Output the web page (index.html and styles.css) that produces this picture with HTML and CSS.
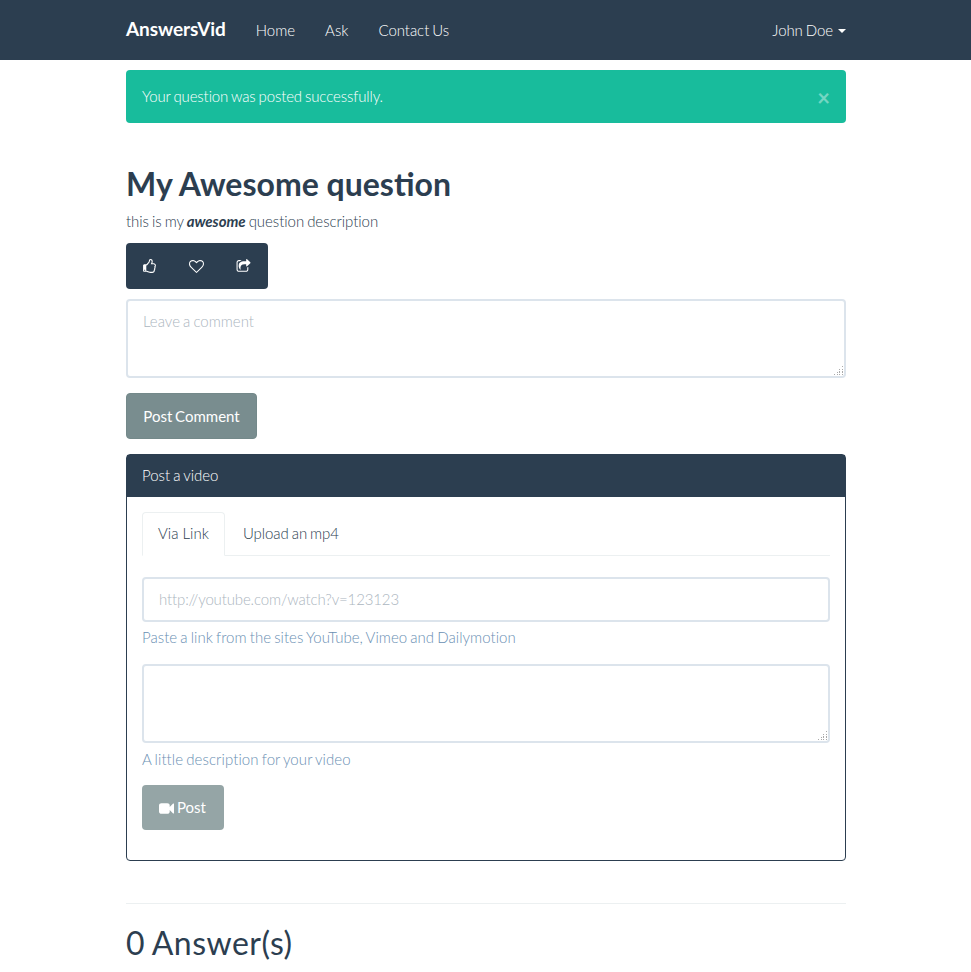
FILE: index.html
```html
<!DOCTYPE html>
<html lang="en">
<head>
<meta charset="utf-8">
<title>AnswersVid</title>
<link rel="stylesheet" href="styles.css">
</head>
<body>
<nav class="navbar">
  <div class="container nav-row">
    <a class="brand">AnswersVid</a>
    <a class="nav-link">Home</a>
    <a class="nav-link">Ask</a>
    <a class="nav-link contact">Contact Us</a>
    <a class="nav-link user">John Doe<span class="caret"></span></a>
  </div>
</nav>
<main class="container">
  <div class="alert"><span class="alert-text">Your question was posted successfully.</span><span class="close">×</span></div>
  <h2 class="title">My Awesome question</h2>
  <p class="description">this is my <strong><em>awesome</em></strong> question description</p>
  <div class="actions">
    <button class="action" aria-label="Like"><svg class="icon" viewBox="0 0 1792 1792"><path d="M384 1344q0-26-19-45t-45-19-45 19-19 45 19 45 45 19 45-19 19-45zm1152-576q0-51-39-89.5t-89-38.5h-352q0-58 48-159.5t48-160.5q0-98-32-145t-128-47q-26 26-38 85t-30.5 125.5-59.5 109.5q-22 23-77 91-4 5-23 30t-31.5 41-34.5 42.5-40 44-38.5 35.5-40 27-35.5 9h-32v640h32q13 0 31.5 3t33 6.5 38 11 35 11.5 35.5 12.5 29 10.5q211 73 342 73h121q192 0 192-167 0-26-5-56 30-16 47.5-52.5t17.5-73.5-18-69q53-50 53-119 0-25-10-55.5t-25-47.5q32-1 53.5-47t21.5-81zm128-1q0 89-49 163 9 33 9 69 0 77-38 144 3 21 3 43 0 101-60 178 1 139-85 219.5t-227 80.5h-129q-96 0-189.5-22.5t-216.5-65.5q-116-40-138-40h-288q-53 0-90.5-37.5t-37.5-90.5v-640q0-53 37.5-90.5t90.5-37.5h274q36-24 137-155 58-75 107-128 24-25 35.5-85.5t30.5-126.5 62-108q39-37 90-37 84 0 151 32.5t102 101.5 35 186q0 93-48 192h176q104 0 180 76t76 179z"/></svg></button>
    <button class="action" aria-label="Favourite"><svg class="icon" viewBox="0 0 1792 1792"><path d="M1664 596q0-81-21.500-143t-55-98.500-81.500-59.500-94-31-98-8-112 25.500-110.500 64-86.500 72-60 61.500q-18 22-49 22t-49-22q-24-28-60-61.500t-86.500-72-110.500-64-112-25.500-98 8-94 31-81.500 59.500-55 98.500-21.500 143q0 168 187 355l581 560 580-559q188-188 188-356zm128 0q0 221-229 450l-623 600q-18 18-44 18t-44-18l-624-602q-10-8-27.500-26t-55.500-65.500-68-97.500-53.500-121-23.500-138q0-220 127-344t351-124q62 0 126.500 21.500t120 58 95.500 68.500 76 68q36-36 76-68t95.500-68.500 120-58 126.500-21.500q224 0 351 124t127 344z"/></svg></button>
    <button class="action share" aria-label="Share"><svg class="icon" viewBox="0 0 1792 1792"><path d="M1472 989v259q0 119-84.500 203.500t-203.500 84.500h-832q-119 0-203.500-84.500t-84.500-203.500v-832q0-119 84.500-203.500t203.500-84.500h255q13 0 22.500 9.500t9.500 22.500q0 27-26 32-77 26-133 60-10 4-16 4h-112q-66 0-113 47t-47 113v832q0 66 47 113t113 47h832q66 0 113-47t47-113v-214q0-19 18-29 28-13 54-37 16-16 35-8 21 9 21 29zm237-496l-384 384q-18 19-45 19-12 0-25-5-39-17-39-59v-192h-160q-323 0-438 131-119 137-74 473 3 23-20 34-8 2-12 2-16 0-26-13-10-14-21-31t-39.500-68.500-49.500-99.500-38.500-114-17.500-122q0-49 3.500-91t14-90 28-88 47-81.500 68.500-74 94.500-61.500 124.500-48.500 159.500-30.500 196.500-11h160v-192q0-42 39-59 13-5 25-5 26 0 45 19l384 384q19 19 19 45t-19 45z"/></svg></button>
  </div>
  <div class="area comment-area">
    <textarea class="field" placeholder="Leave a comment"></textarea>
    <svg class="grip" viewBox="0 0 10 10"><path d="M8 0h1v1H8zM5 3h1v1H5zM8 3h1v1H8zM3 6h1v1H3zM5 5h1v1H5zM8 5h1v1H8zM5 6h1v1H5zM8 6h1v1H8zM0 8h1v1H0zM3 8h1v1H3zM5 8h1v1H5zM8 8h1v1H8z"/></svg>
  </div>
  <button class="btn btn-comment">Post Comment</button>
  <section class="panel">
    <header class="panel-heading">Post a video</header>
    <div class="panel-body">
      <div class="tabs"><a class="tab active">Via Link</a><a class="tab upload">Upload an mp4</a></div>
      <input class="field link-field" type="text" placeholder="http://youtube.com/watch?v=123123">
      <p class="help">Paste a link from the sites YouTube, Vimeo and Dailymotion</p>
      <div class="area">
        <textarea class="field" aria-label="Video description"></textarea>
        <svg class="grip" viewBox="0 0 10 10"><path d="M8 0h1v1H8zM5 3h1v1H5zM8 3h1v1H8zM3 6h1v1H3zM5 5h1v1H5zM8 5h1v1H8zM5 6h1v1H5zM8 6h1v1H8zM0 8h1v1H0zM3 8h1v1H3zM5 8h1v1H5zM8 8h1v1H8z"/></svg>
      </div>
      <p class="help">A little description for your video</p>
      <button class="btn btn-video"><svg class="icon" viewBox="0 0 1792 1792"><path d="M1792 352v1088q0 42-39 59-13 5-25 5-27 0-45-19l-403-403v166q0 119-84.500 203.500t-203.500 84.500h-704q-119 0-203.500-84.500t-84.500-203.500v-704q0-119 84.500-203.500t203.500-84.500h704q119 0 203.500 84.500t84.500 203.500v165l403-402q18-19 45-19 12 0 25 5 39 17 39 59z"/></svg>Post</button>
    </div>
  </section>
  <hr class="rule">
  <h2 class="answers">0 Answer(s)</h2>
</main>
</body>
</html>
```
FILE: styles.css
```css
* { box-sizing: border-box; }
html { overflow: hidden; }
body {
  margin: 0;
  background: #fff;
  color: #2c3e50;
  font: 300 15px/21px Lato, sans-serif;
  word-spacing: -1px;
}
.container { width: 720px; margin: 0 auto 0 126px; }
.navbar { height: 60px; background: #2c3e50; color: #fff; }
.nav-row { display: flex; height: 60px; align-items: center; }
.brand { font-size: 19px; font-weight: 700; letter-spacing: -.08px; margin-right: 15px; padding-bottom: 3px; }
.nav-link { padding: 0 15px; }
.contact { letter-spacing: -.05px; }
.user { display: flex; align-items: center; margin-left: auto; padding-right: 0; letter-spacing: -.08px; }
.caret {
  margin: 2px 0 0 5px;
  border: 4px solid transparent;
  border-top-color: #fff;
  border-bottom: 0;
}
.alert {
  display: flex;
  justify-content: space-between;
  height: 53px;
  margin-top: 10px;
  padding: 16px;
  border-radius: 4px;
  background: #18bc9c;
  color: #fff;
}
.alert-text { letter-spacing: -.12px; }
.close { font-size: 22px; line-height: 24px; font-weight: 700; opacity: .4; }
.title { margin: 43px 0 0; font-size: 32px; line-height: 36px; font-weight: 700; word-spacing: 0; }
.description { margin: 9px 0 11px; letter-spacing: -.04px; }
.description strong { font-weight: 700; }
.actions { display: flex; width: 142px; height: 46px; border-radius: 4px; background: #2c3e50; }
.action { flex: 1; padding: 0; border: 0; background: none; display: flex; align-items: center; justify-content: center; }
.share { padding-right: 1px; }
.icon { width: 15px; height: 15px; fill: #fff; }
.area { position: relative; height: 79px; }
.comment-area { margin: 10px 0 15px; }
.field {
  display: block;
  width: 100%;
  height: 79px;
  padding: 10px 15px;
  border: 2px solid #dce4ec;
  border-radius: 4px;
  background: #fff;
  color: #2c3e50;
  font: inherit;
  word-spacing: -1px;
  resize: none;
}
.field::placeholder { color: #acb6c0; opacity: 1; }
.grip { position: absolute; right: 2px; bottom: 2px; width: 10px; height: 10px; fill: #aaa; shape-rendering: crispEdges; }
.btn {
  display: flex;
  align-items: center;
  justify-content: center;
  border: 0;
  border-radius: 4px;
  padding: 0;
  color: #fff;
  font: 400 15px/21px Lato, sans-serif;
}
.btn-comment { width: 131px; height: 46px; background: #798d8f; border: 1px solid #74898a; word-spacing: -1px; }
.panel { height: 407px; margin-top: 15px; border: 1px solid #2c3e50; border-radius: 4px; }
.panel-heading { height: 42px; padding: 10px 15px; background: #2c3e50; color: #fff; }
.panel-body { padding: 15px; }
.tabs { display: flex; height: 44px; gap: 2px; border-bottom: 1px solid #ecf0f1; margin-bottom: 21px; }
.tab { height: 44px; padding: 10px 15px; border: 1px solid transparent; border-radius: 4px 4px 0 0; }
.tab.active { width: 83px; border-color: #ecf0f1; border-bottom-color: #fff; background: #fff; word-spacing: 0; }
.upload { letter-spacing: -.08px; }
.link-field { height: 45px; padding: 9px 15px 11px; letter-spacing: -.14px; }
.help { margin: 5px 0 16px; color: #6a8fb3; letter-spacing: .04px; }
.area + .help { margin: 6px 0 15px; letter-spacing: .08px; }
.btn-video { width: 82px; height: 45px; gap: 3px; padding-right: 1px; background: #95a5a6; }
.btn-video .icon { margin-top: 2px; }
.rule { height: 1px; margin: 42px 0 0; border: 0; background: #ecf0f1; }
.answers { margin: 21px 0 0; font-size: 32px; line-height: 36px; font-weight: 400; letter-spacing: .5px; }
```
